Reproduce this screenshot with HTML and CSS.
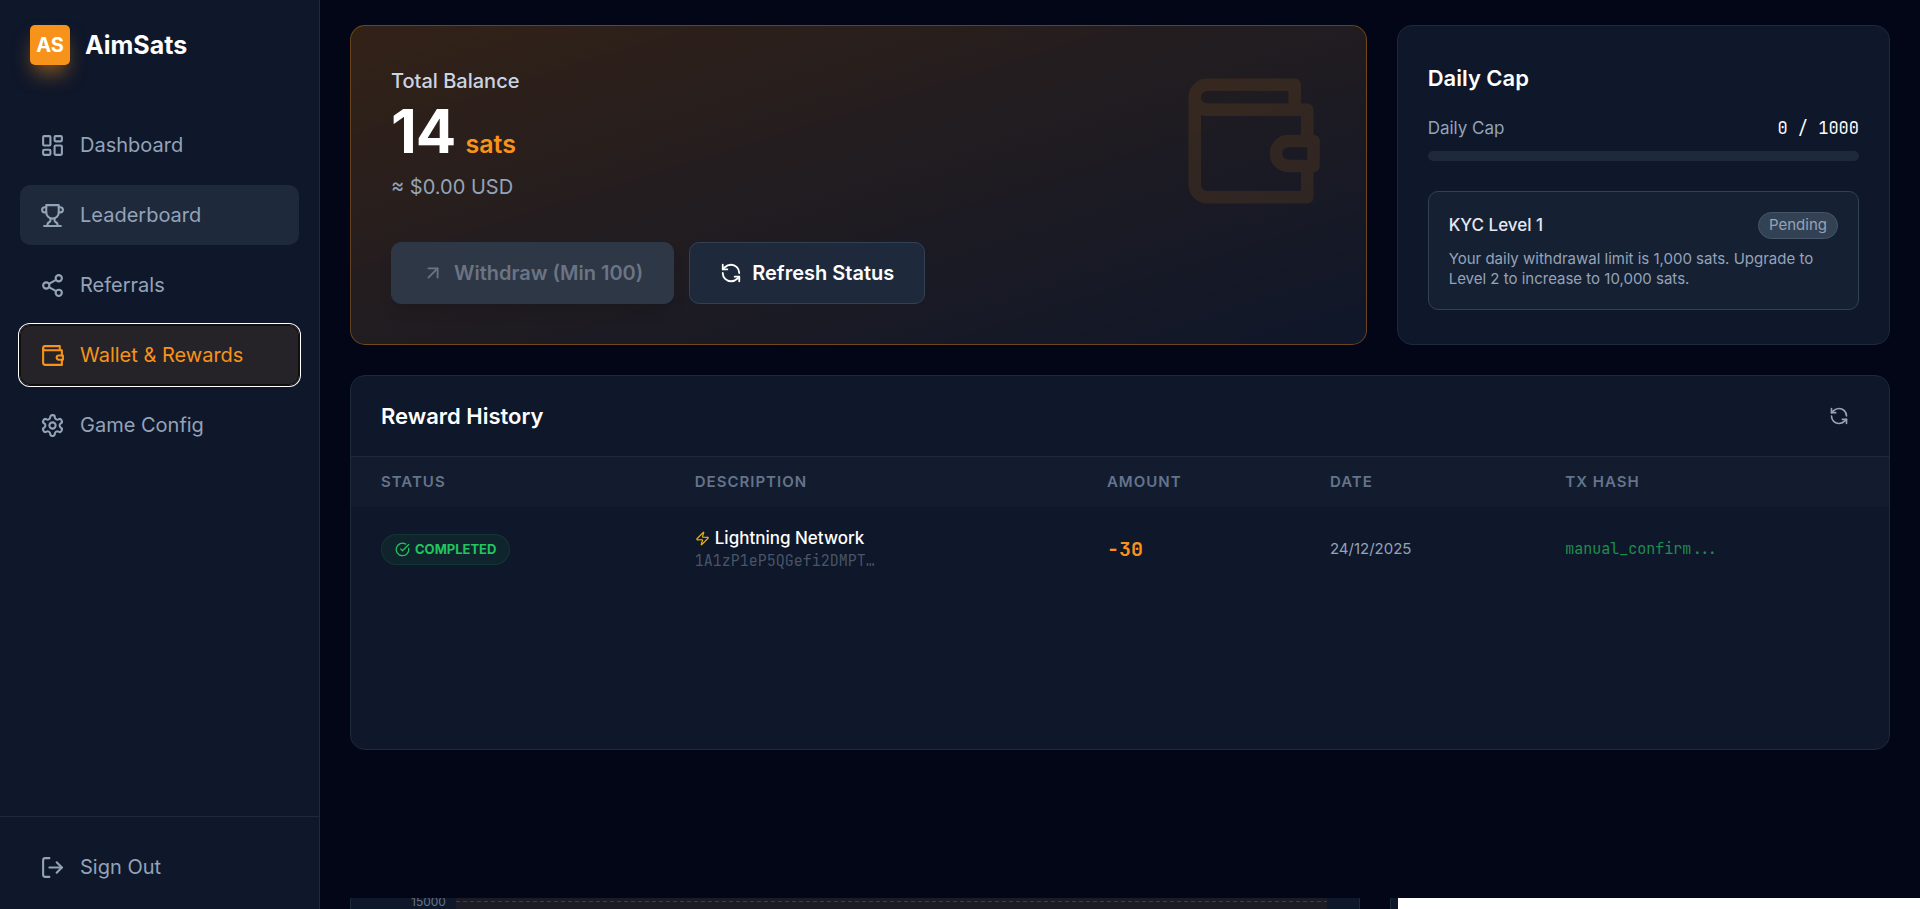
FILE: index.html
```html
<!DOCTYPE html>
<html lang="en">
<head>
<meta charset="utf-8">
<meta name="viewport" content="width=device-width, initial-scale=1">
<title>AimSats – Wallet &amp; Rewards</title>
<link rel="stylesheet" href="styles.css">
</head>
<body>
<div class="app">
  <aside class="sidebar">
    <div class="brand">
      <span class="brand-mark">AS</span>
      <span class="brand-name">AimSats</span>
    </div>
    <nav class="nav">
      <a class="nav-item" href="#dashboard">
        <svg class="icon icon-nav" viewBox="0 0 24 24"><rect width="7" height="9" x="3" y="3" rx="1"/><rect width="7" height="5" x="14" y="3" rx="1"/><rect width="7" height="9" x="14" y="12" rx="1"/><rect width="7" height="5" x="3" y="16" rx="1"/></svg>
        Dashboard
      </a>
      <a class="nav-item nav-item-hover" href="#leaderboard">
        <svg class="icon icon-nav" viewBox="0 0 24 24"><path d="M6 9H4.5a2.5 2.5 0 0 1 0-5H6"/><path d="M18 9h1.5a2.5 2.5 0 0 0 0-5H18"/><path d="M4 22h16"/><path d="M10 14.66V17c0 .55-.47.98-.97 1.21C7.85 18.75 7 20.24 7 22"/><path d="M14 14.66V17c0 .55.47.98.97 1.21C16.15 18.75 17 20.24 17 22"/><path d="M18 2H6v7a6 6 0 0 0 12 0V2Z"/></svg>
        Leaderboard
      </a>
      <a class="nav-item" href="#referrals">
        <svg class="icon icon-nav" viewBox="0 0 24 24"><circle cx="18" cy="5" r="3"/><circle cx="6" cy="12" r="3"/><circle cx="18" cy="19" r="3"/><path d="M8.59 13.51l6.83 3.98"/><path d="M15.41 6.51l-6.82 3.98"/></svg>
        Referrals
      </a>
      <a class="nav-item nav-item-active" href="#wallet" aria-current="page">
        <svg class="icon icon-nav" viewBox="0 0 24 24"><path d="M21 12V7H5a2 2 0 0 1 0-4h14v4"/><path d="M3 5v14a2 2 0 0 0 2 2h16v-5"/><path d="M18 12a2 2 0 0 0 0 4h4v-4Z"/></svg>
        Wallet &amp; Rewards
      </a>
      <a class="nav-item" href="#config">
        <svg class="icon icon-nav" viewBox="0 0 24 24"><path d="M12.22 2h-.44a2 2 0 0 0-2 2v.18a2 2 0 0 1-1 1.73l-.43.25a2 2 0 0 1-2 0l-.15-.08a2 2 0 0 0-2.73.73l-.22.38a2 2 0 0 0 .73 2.73l.15.1a2 2 0 0 1 1 1.72v.51a2 2 0 0 1-1 1.74l-.15.09a2 2 0 0 0-.73 2.73l.22.38a2 2 0 0 0 2.73.73l.15-.08a2 2 0 0 1 2 0l.43.25a2 2 0 0 1 1 1.73V20a2 2 0 0 0 2 2h.44a2 2 0 0 0 2-2v-.18a2 2 0 0 1 1-1.73l.43-.25a2 2 0 0 1 2 0l.15.08a2 2 0 0 0 2.73-.73l.22-.39a2 2 0 0 0-.73-2.73l-.15-.08a2 2 0 0 1-1-1.74v-.5a2 2 0 0 1 1-1.74l.15-.09a2 2 0 0 0 .73-2.73l-.22-.38a2 2 0 0 0-2.73-.73l-.15.08a2 2 0 0 1-2 0l-.43-.25a2 2 0 0 1-1-1.73V4a2 2 0 0 0-2-2z"/><circle cx="12" cy="12" r="3"/></svg>
        Game Config
      </a>
    </nav>
    <div class="sidebar-footer">
      <button class="nav-item" type="button">
        <svg class="icon icon-nav" viewBox="0 0 24 24"><path d="M9 21H5a2 2 0 0 1-2-2V5a2 2 0 0 1 2-2h4"/><path d="M16 17l5-5-5-5"/><path d="M21 12H9"/></svg>
        Sign Out
      </button>
    </div>
  </aside>

  <main class="main">
    <div class="content">
      <div class="top-grid">
        <section class="card balance">
          <div class="balance-body">
            <p class="balance-label">Total Balance</p>
            <p class="balance-amount">14 <span class="balance-unit">sats</span></p>
            <p class="balance-usd">≈ $0.00 USD</p>
            <div class="actions">
              <button class="btn btn-disabled" type="button" disabled>
                <svg class="icon icon-btn" viewBox="0 0 24 24"><path d="M7 7h10v10"/><path d="M7 17 17 7"/></svg>
                Withdraw (Min 100)
              </button>
              <button class="btn btn-secondary" type="button">
                <svg class="icon icon-btn" viewBox="0 0 24 24"><path d="M21 12a9 9 0 0 0-9-9 9.75 9.75 0 0 0-6.74 2.74L3 8"/><path d="M3 3v5h5"/><path d="M3 12a9 9 0 0 0 9 9 9.75 9.75 0 0 0 6.74-2.74L21 16"/><path d="M16 16h5v5"/></svg>
                Refresh Status
              </button>
            </div>
          </div>
          <svg class="icon balance-art" viewBox="0 0 24 24" aria-hidden="true"><path d="M21 12V7H5a2 2 0 0 1 0-4h14v4"/><path d="M3 5v14a2 2 0 0 0 2 2h16v-5"/><path d="M18 12a2 2 0 0 0 0 4h4v-4Z"/></svg>
        </section>

        <section class="card cap">
          <h2 class="card-title cap-title">Daily Cap</h2>
          <div class="cap-row">
            <span class="cap-label">Daily Cap</span>
            <span class="cap-value">0 / 1000</span>
          </div>
          <div class="bar" role="progressbar" aria-label="Daily Cap" aria-valuemin="0" aria-valuemax="1000" aria-valuenow="0"></div>
          <div class="kyc">
            <div class="kyc-head">
              <h3 class="kyc-title">KYC Level 1</h3>
              <span class="kyc-badge">Pending</span>
            </div>
            <p class="kyc-text">Your daily withdrawal limit is 1,000 sats. Upgrade to Level 2 to increase to 10,000 sats.</p>
          </div>
        </section>
      </div>

      <section class="card history">
        <header class="history-head">
          <h2 class="card-title">Reward History</h2>
          <button class="icon-button" type="button" aria-label="Refresh history">
            <svg class="icon icon-refresh" viewBox="0 0 24 24"><path d="M21 12a9 9 0 0 0-9-9 9.75 9.75 0 0 0-6.74 2.74L3 8"/><path d="M3 3v5h5"/><path d="M3 12a9 9 0 0 0 9 9 9.75 9.75 0 0 0 6.74-2.74L21 16"/><path d="M16 16h5v5"/></svg>
          </button>
        </header>
        <div class="table-wrap">
          <table class="table">
            <colgroup><col class="col-status"><col class="col-desc"><col class="col-amount"><col class="col-date"><col class="col-hash"></colgroup>
            <thead>
              <tr><th scope="col">Status</th><th scope="col">Description</th><th scope="col">Amount</th><th scope="col">Date</th><th scope="col">TX Hash</th></tr>
            </thead>
            <tbody>
              <tr>
                <td>
                  <span class="status">
                    <svg class="icon icon-small" viewBox="0 0 24 24"><path d="M21.801 10A10 10 0 1 1 17 3.335"/><path d="M9 11l3 3L22 4"/></svg>
                    Completed
                  </span>
                </td>
                <td>
                  <div class="desc">
                    <svg class="icon icon-small icon-zap" viewBox="0 0 24 24"><path d="M4 14a1 1 0 0 1-.78-1.63l9.9-10.2a.5.5 0 0 1 .86.46l-1.92 6.02A1 1 0 0 0 13 10h7a1 1 0 0 1 .78 1.63l-9.9 10.2a.5.5 0 0 1-.86-.46l1.92-6.02A1 1 0 0 0 11 14z"/></svg>
                    Lightning Network
                  </div>
                  <div class="address">1A1zP1eP5QGefi2DMPT…</div>
                </td>
                <td class="amount">-30</td>
                <td class="date">24/12/2025</td>
                <td class="hash">manual_confirm...</td>
              </tr>
            </tbody>
          </table>
        </div>
      </section>
    </div>

    <div class="peek">
      <div class="peek-chart">
        <span class="peek-tick">15000</span>
        <div class="peek-plot"><div class="peek-gridline"></div></div>
      </div>
      <div class="peek-panel"></div>
    </div>
  </main>
</div>
</body>
</html>
```
FILE: styles.css
```css
:root {
  --bg: #020617;
  --card: #0f172a;
  --line: #1e293b;
  --line-strong: #334155;
  --muted: #94a3b8;
  --dim: #64748b;
  --orange: #f7931a;
  --mono: "JetBrains Mono", "DejaVu Sans Mono", monospace;
}

*, *::before, *::after { box-sizing: border-box; }

body {
  margin: 0;
  background: var(--bg);
  color: #fff;
  font-family: Inter, sans-serif;
  font-size: 20px;
  line-height: 30px;
}

h2, h3, p { margin: 0; }
button { font: inherit; cursor: pointer; }

.icon {
  flex: none;
  fill: none;
  stroke: currentColor;
  stroke-width: 2;
  stroke-linecap: round;
  stroke-linejoin: round;
}
.icon-nav { width: 25px; height: 25px; }
.icon-btn { width: 22px; height: 22px; }
.icon-refresh { width: 20px; height: 20px; }
.icon-small { width: 15px; height: 15px; }
.icon-zap { color: #eab308; }

.app { display: flex; min-height: 100vh; }

/* Sidebar */
.sidebar {
  display: flex;
  flex-direction: column;
  flex: none;
  width: 320px;
  background: var(--card);
  border-right: 1px solid var(--line);
}
.brand {
  display: flex;
  align-items: center;
  gap: 15px;
  padding: 25px 30px;
}
.brand-mark {
  display: grid;
  place-items: center;
  width: 40px;
  height: 40px;
  border-radius: 5px;
  background: var(--orange);
  box-shadow: 0 12px 19px -4px rgba(247, 147, 26, .5);
  font-weight: 700;
}
.brand-name { font-size: 25px; font-weight: 700; }
.nav {
  display: flex;
  flex-direction: column;
  flex: 1;
  gap: 10px;
  padding: 25px 20px;
}
.nav-item {
  display: flex;
  align-items: center;
  gap: 15px;
  width: 100%;
  padding: 15px 20px;
  border: 0;
  border-radius: 10px;
  background: transparent;
  color: var(--muted);
  text-align: left;
  text-decoration: none;
}
.nav-item-hover { background: var(--line); }
.nav-item-active {
  background: rgba(247, 147, 26, .1);
  color: var(--orange);
  box-shadow: inset 0 0 0 1px #101010, 0 0 0 1px #101010, 0 0 0 2px #fff;
}
.sidebar-footer {
  padding: 20px 20px 12px;
  border-top: 1px solid var(--line);
}

/* Main column */
.main {
  display: flex;
  flex-direction: column;
  flex: 1;
  min-width: 0;
}
.content {
  display: flex;
  flex-direction: column;
  flex: 1;
  gap: 30px;
  padding: 25px 30px;
}
.top-grid {
  display: grid;
  grid-template-columns: repeat(3, 1fr);
  gap: 30px;
}
.card {
  border: 1px solid var(--line);
  border-radius: 15px;
  background: var(--card);
}
.card-title {
  font-size: 22px;
  font-weight: 600;
}

/* Balance */
.balance {
  display: flex;
  grid-column: span 2;
  align-items: flex-start;
  justify-content: space-between;
  padding: 40px;
  border-color: rgba(247, 147, 26, .35);
  background: linear-gradient(to bottom right, rgba(247, 147, 26, .2), var(--card));
}
.balance-label { margin-bottom: 5px; color: #cbd5e1; font-weight: 500; }
.balance-amount {
  display: flex;
  align-items: baseline;
  gap: 10px;
  margin-bottom: 11px;
  font-size: 60px;
  font-weight: 700;
  line-height: 60px;
  letter-spacing: -1px;
}
.balance-unit {
  color: var(--orange);
  font-size: 25px;
  font-weight: 600;
  line-height: 30px;
  letter-spacing: 0;
}
.balance-usd { color: var(--muted); }
.balance-art {
  width: 150px;
  height: 150px;
  color: var(--orange);
  opacity: .1;
}
.actions { display: flex; gap: 15px; margin-top: 40px; }
.btn {
  display: flex;
  align-items: center;
  gap: 10px;
  padding: 15px 30px;
  border: 1px solid transparent;
  border-radius: 10px;
  font-weight: 600;
}
.btn-disabled {
  border-color: #2e3746;
  background: #2e3746;
  color: #6b7484;
  box-shadow: 0 10px 15px -3px rgba(0, 0, 0, .1);
  cursor: not-allowed;
}
.btn-secondary {
  border-color: var(--line-strong);
  background: var(--line);
  color: #fff;
}

/* Daily cap */
.cap {
  display: flex;
  flex-direction: column;
  justify-content: center;
  padding: 30px;
}
.cap-title { margin-bottom: 20px; line-height: 36px; }
.cap-row {
  display: flex;
  justify-content: space-between;
  margin-bottom: 10px;
  font-size: 17px;
  line-height: 25px;
}
.cap-label { color: var(--muted); }
.cap-value { font-family: var(--mono); }
.bar {
  height: 10px;
  margin-bottom: 30px;
  border-radius: 5px;
  background: var(--line);
}
.kyc {
  padding: 20px;
  border: 1px solid var(--line-strong);
  border-radius: 10px;
  background: rgba(30, 41, 59, .5);
}
.kyc-head {
  display: flex;
  align-items: center;
  justify-content: space-between;
  margin-bottom: 10px;
}
.kyc-title {
  color: #e2e8f0;
  font-size: 17px;
  font-weight: 500;
  line-height: 25px;
}
.kyc-badge {
  padding: 2px 10px 3px;
  border: 1px solid #475569;
  border-radius: 14px;
  background: var(--line-strong);
  color: var(--muted);
  font-size: 15px;
  line-height: 20px;
}
.kyc-text { color: var(--muted); font-size: 15px; line-height: 20px; }

/* Reward history */
.history { overflow: hidden; }
.history-head {
  display: flex;
  align-items: center;
  justify-content: space-between;
  padding: 20px 30px;
  border-bottom: 1px solid var(--line);
}
.icon-button {
  display: grid;
  place-items: center;
  padding: 10px;
  border: 0;
  border-radius: 10px;
  background: transparent;
  color: var(--muted);
}
.table-wrap { min-height: 292px; }
.table {
  width: 100%;
  border-collapse: collapse;
  table-layout: fixed;
  text-align: left;
}
.col-status { width: 20.4%; }
.col-desc { width: 26.8%; }
.col-amount { width: 14.5%; }
.col-date { width: 15.3%; }
.col-hash { width: 23%; }
.table thead { background: rgba(30, 41, 59, .3); }
.table th {
  padding: 15px 30px;
  color: var(--dim);
  font-size: 15px;
  font-weight: 600;
  line-height: 20px;
  letter-spacing: 1px;
  text-transform: uppercase;
}
.table td { padding: 19px 30px; }
.status {
  display: inline-flex;
  align-items: center;
  gap: 5px;
  padding: 5px 13px;
  border: 1px solid rgba(34, 197, 94, .12);
  border-radius: 16px;
  background: rgba(34, 197, 94, .08);
  color: #22c55e;
  font-size: 13px;
  font-weight: 700;
  line-height: 19px;
  text-transform: uppercase;
  vertical-align: middle;
}
.desc {
  display: flex;
  align-items: center;
  gap: 5px;
  font-size: 17px;
  font-weight: 500;
  line-height: 25px;
}
.address {
  color: #475569;
  font-family: var(--mono);
  font-size: 15px;
  line-height: 20px;
}
.table .amount {
  color: var(--orange);
  font-family: var(--mono);
  font-weight: 700;
}
.date { color: var(--muted); font-size: 15px; }
.hash {
  color: rgba(34, 197, 94, .7);
  font-family: var(--mono);
  font-size: 15px;
}

/* Top edge of the section below the fold */
.peek {
  display: grid;
  grid-template-rows: 100%;
  grid-template-columns: 1010fr 530fr;
  gap: 30px;
  height: 11px;
  padding-left: 30px;
  overflow: hidden;
}
.peek-chart {
  display: flex;
  align-items: flex-end;
  gap: 10px;
  padding: 0 32px 0 60px;
  border: solid var(--line);
  border-width: 0 1px;
  background: var(--card);
}
.peek-tick {
  color: var(--dim);
  font-size: 12px;
  line-height: 15px;
}
.peek-plot {
  flex: 1;
  align-self: stretch;
  padding-top: 3px;
  background: #1c1b26;
}
.peek-gridline {
  height: 1px;
  background: repeating-linear-gradient(to right, #334155 0 4px, transparent 4px 7px);
}
.peek-panel {
  border-left: 1px solid var(--line);
  background: linear-gradient(to right, var(--card) 7px, #fff 7px);
}
```
